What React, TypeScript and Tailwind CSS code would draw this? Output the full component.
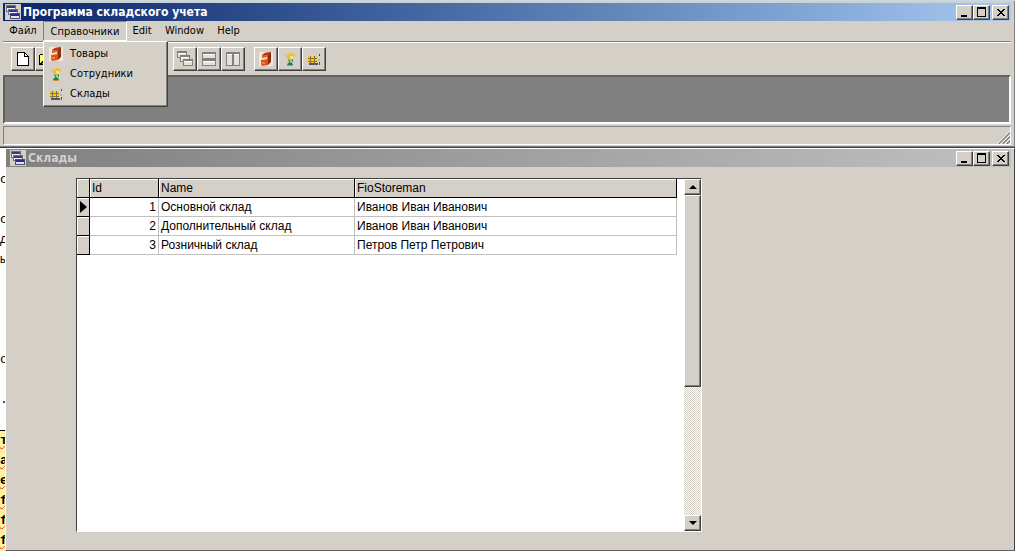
import type { ReactNode } from "react"
import clsx from "clsx"
import { Save, Scissors, Copy, ClipboardPaste } from "lucide-react"

const RAISED =
  "border border-t-white border-l-white border-r-[#404040] border-b-[#404040] bg-[#d4d0c8] shadow-[inset_-1px_-1px_0_#808080]"

const STORES = [
  { id: 1, name: "Основной склад", storeman: "Иванов Иван Иванович" },
  { id: 2, name: "Дополнительный склад", storeman: "Иванов Иван Иванович" },
  { id: 3, name: "Розничный склад", storeman: "Петров Петр Петрович" },
]

// lines of the code editor that lies behind both windows
const EDITOR_LINES = ["", "с", "", "с", "д", "ы", "", "", "", "", "о", "", ".", ""]
const MARKED_LINES = ["т", "а", "е", "f", "f", "f"]

function AppIcon() {
  return (
    <svg viewBox="0 0 16 16" className="h-4 w-4 shrink-0" shapeRendering="crispEdges" aria-hidden="true">
      <rect width="16" height="16" fill="#d4d0c8" />
      <rect x="1" y="1" width="10" height="7" fill="#707078" />
      <rect x="2" y="2" width="8" height="2" fill="#3a3a80" />
      <rect x="2" y="4" width="8" height="3" fill="#f0f0f4" />
      <rect x="3" y="5" width="10" height="6" fill="#707078" />
      <rect x="4" y="6" width="8" height="2" fill="#3a3a80" />
      <rect x="4" y="8" width="8" height="2" fill="#f0f0f4" />
      <rect x="5" y="9" width="10" height="6" fill="#505060" />
      <rect x="6" y="10" width="8" height="2" fill="#2a2a90" />
      <rect x="6" y="12" width="8" height="2" fill="#e4e4ec" />
    </svg>
  )
}

function NewIcon() {
  return (
    <svg viewBox="0 0 16 16" className="h-4 w-4" shapeRendering="crispEdges" aria-hidden="true">
      <path d="M2 1h8v1h1v1h1v1h1v1h1v10H2z" fill="#000" />
      <path d="M3 2h6v4h4v8H3z" fill="#fff" />
      <path d="M10 3h1v1h1v1h-2z" fill="#fff" />
    </svg>
  )
}

function OpenIcon() {
  return (
    <svg viewBox="0 0 16 16" className="h-4 w-4" shapeRendering="crispEdges" aria-hidden="true">
      <path d="M0 4h1V3h4v1h6v4h4l-4 6H0z" fill="#000" />
      <path d="M1 5V4h4v1h5v3H5l-4 5z" fill="#ffff66" />
      <path d="M5 9h9l-3 4H3z" fill="#808000" />
    </svg>
  )
}

function CascadeIcon() {
  return (
    <svg viewBox="0 0 16 16" className="h-4 w-4" shapeRendering="crispEdges" aria-hidden="true">
      {[
        [0, 0],
        [3, 4],
        [6, 8],
      ].map(([x, y]) => (
        <g key={x}>
          <rect x={x} y={y} width="10" height="7" fill="#808080" />
          <rect x={x + 1} y={y + 2} width="8" height="1" fill="#fff" />
          <rect x={x + 1} y={y + 3} width="8" height="3" fill="#e4e2dc" />
        </g>
      ))}
    </svg>
  )
}

function TileHorizontalIcon() {
  return (
    <svg viewBox="0 0 16 16" className="h-4 w-4" shapeRendering="crispEdges" aria-hidden="true">
      {[1, 8].map((y) => (
        <g key={y}>
          <rect x="1" y={y} width="14" height="7" fill="#808080" />
          <rect x="2" y={y + 2} width="12" height="1" fill="#fff" />
          <rect x="2" y={y + 3} width="12" height="3" fill="#e4e2dc" />
        </g>
      ))}
    </svg>
  )
}

function TileVerticalIcon() {
  return (
    <svg viewBox="0 0 16 16" className="h-4 w-4" shapeRendering="crispEdges" aria-hidden="true">
      {[1, 8].map((x) => (
        <g key={x}>
          <rect x={x} y="1" width="7" height="14" fill="#808080" />
          <rect x={x + 1} y="3" width="5" height="1" fill="#fff" />
          <rect x={x + 1} y="4" width="5" height="10" fill="#e4e2dc" />
        </g>
      ))}
    </svg>
  )
}

function GoodsIcon() {
  return (
    <svg viewBox="0 0 16 16" className="h-4 w-4" aria-hidden="true">
      <rect x="1" y="1" width="14" height="14" fill="#f4e6dc" />
      <path d="M4 4l3-2 6-1v5l-3 2-6 1z" fill="#e0602c" />
      <path d="M4 4l3-2 6-1-3 3z" fill="#a83c14" />
      <path d="M10 4l3-3v10l-3 3z" fill="#8c2e10" />
      <path d="M3 9l7-1v6l-6 1-1-2z" fill="#e05010" />
      <path d="M4 7l5-1v2l-5 1z" fill="#f4d8c4" />
      <path d="M3 11h4v2H4z" fill="#f48038" />
    </svg>
  )
}

function StaffIcon() {
  return (
    <svg viewBox="0 0 16 16" className="h-4 w-4" aria-hidden="true">
      <path d="M6 3l3-1 4 1v2l-2 1-3 3-2-2z" fill="#f0c030" />
      <path d="M8 5h3v3H9z" fill="#f8e0a8" />
      <path d="M3 3l2 1 2 3-1 1z" fill="#e8b838" />
      <path d="M6 8l2 1 3-1v3l-2 1H7z" fill="#38a048" />
      <path d="M8 9l2 1-1 2z" fill="#f0f4f0" />
      <path d="M6 12h4l1 2H5z" fill="#207850" />
      <path d="M5 14h6v1H5z" fill="#c89838" />
    </svg>
  )
}

function StoresIcon() {
  return (
    <svg viewBox="0 0 16 16" className="h-4 w-4" shapeRendering="crispEdges" aria-hidden="true">
      <rect x="2" y="5" width="9" height="7" fill="#f4cc38" />
      <path d="M2 7h9v1H2zM2 10h9v1H2zM4 5h1v7H4zM8 5h1v7H8z" fill="#8c7030" />
      <rect x="3" y="12" width="9" height="2" fill="#485870" />
      <rect x="13" y="3" width="1" height="2" fill="#304870" />
      <rect x="12" y="8" width="2" height="2" fill="#90b8d8" />
      <rect x="13" y="11" width="1" height="3" fill="#2860a0" />
    </svg>
  )
}

const DIRECTORIES = [
  { label: "Товары", icon: GoodsIcon },
  { label: "Сотрудники", icon: StaffIcon },
  { label: "Склады", icon: StoresIcon },
]

const TOOL_GROUPS = [
  [
    { label: "New", icon: NewIcon },
    { label: "Open", icon: OpenIcon },
    { label: "Save", icon: () => <Save className="h-4 w-4" /> },
  ],
  [
    { label: "Cut", icon: () => <Scissors className="h-4 w-4" /> },
    { label: "Copy", icon: () => <Copy className="h-4 w-4" /> },
    { label: "Paste", icon: () => <ClipboardPaste className="h-4 w-4" /> },
  ],
  [
    { label: "Cascade", icon: CascadeIcon },
    { label: "Tile horizontally", icon: TileHorizontalIcon },
    { label: "Tile vertically", icon: TileVerticalIcon },
  ],
  DIRECTORIES,
]

function CaptionButton({ label, children, className }: { label: string; children: ReactNode; className?: string }) {
  return (
    <button type="button" aria-label={label} className={clsx(RAISED, "flex h-[15px] w-[17px] items-center justify-center", className)}>
      <svg viewBox="0 0 12 11" className="h-[11px] w-3 shrink-0" shapeRendering="crispEdges" aria-hidden="true">
        {children}
      </svg>
    </button>
  )
}

function TitleBar({ title, active }: { title: string; active?: boolean }) {
  return (
    <div
      className={clsx(
        "flex h-[18px] items-center bg-linear-to-r pr-[2px]",
        active ? "from-[#0a246a] to-[#a6caf0] pl-[2px] text-white" : "from-[#808080] to-[#c0c0c0] pl-1 text-[#d4d0c8]"
      )}
    >
      <AppIcon />
      <h1 className="ml-[2px] flex-1 text-[12px] leading-4 font-bold whitespace-nowrap">{title}</h1>
      <CaptionButton label="Minimize">
        <rect x="2" y="8" width="6" height="2" />
      </CaptionButton>
      <CaptionButton label="Maximize">
        <path d="M1 0h9v10H1zM2 2v7h7V2z" fillRule="evenodd" />
      </CaptionButton>
      <CaptionButton label="Close" className="ml-[2px]">
        <path d="M2 2h2v1h1v1h2V3h1V2h2v1H9v1H8v1H7v1h1v1h1v1h1v1H8V8H7V7H5v1H4v1H2V8h1V7h1V6h1V5H4V4H3V3H2z" />
      </CaptionButton>
    </div>
  )
}

function MenuBar() {
  return (
    <nav className="flex h-[21px] items-start text-[11px] leading-4 whitespace-nowrap">
      <button type="button" className="w-10 pt-[2px]">
        Файл
      </button>
      <div className="relative">
        <button
          type="button"
          aria-expanded="true"
          className="h-[20px] w-[84px] border border-t-[#808080] border-r-white border-b-white border-l-[#808080] pt-[2px]"
        >
          Справочники
        </button>
        <div className={clsx(RAISED, "absolute top-[20px] left-0 z-10 w-[125px] p-[2px]")}>
          {DIRECTORIES.map(({ label, icon: Icon }) => (
            <button key={label} type="button" className="flex h-5 w-full items-center gap-[6px] pl-[2px]">
              <Icon />
              {label}
            </button>
          ))}
        </div>
      </div>
      <button type="button" className="w-[30px] pt-[2px]">
        Edit
      </button>
      <button type="button" className="w-[55px] pt-[2px]">
        Window
      </button>
      <button type="button" className="w-[33px] pt-[2px]">
        Help
      </button>
    </nav>
  )
}

function ToolBar() {
  return (
    <div className="flex gap-[9px] border-t border-white py-1 pl-2 shadow-[0_-1px_0_#808080]">
      {TOOL_GROUPS.map((group, idx) => (
        <div key={idx} className="flex">
          {group.map(({ label, icon: Icon }) => (
            <button key={label} type="button" aria-label={label} className={clsx(RAISED, "flex h-6 w-6 items-center justify-center")}>
              <Icon />
            </button>
          ))}
        </div>
      ))}
    </div>
  )
}

function MainWindow() {
  return (
    <section className="border-t border-b border-t-[#c4dae8] border-b-[#404040] bg-[#d4d0c8] pt-[2px] pr-1 pb-[2px] pl-[3px] shadow-[inset_-1px_-1px_0_#808080]">
      <TitleBar title="Программа складского учета" active />
      <MenuBar />
      <ToolBar />
      <div className="h-[49px] border-2 border-t-[#606060] border-r-white border-b-white border-l-[#606060] bg-[#808080]" />
      <footer className="mt-[2px] flex h-[19px] items-end justify-end border border-t-[#808080] border-r-white border-b-white border-l-[#808080]">
        <svg viewBox="0 0 14 14" className="h-[14px] w-[14px]" aria-hidden="true">
          <path d="M1 14L14 1M5 14L14 5M9 14L14 9" stroke="#fff" strokeWidth="1" />
          <path d="M2.500 14L14 2.500M6.500 14L14 6.500M10.500 14L14 10.500" stroke="#808080" strokeWidth="1.300" />
        </svg>
      </footer>
    </section>
  )
}

function StoresTable() {
  const head = "h-[19px] border-r border-b border-black bg-[#d4d0c8] pl-[2px] text-left font-normal shadow-[inset_1px_1px_0_#fff]"
  const cell = "border-r border-b border-[#c0c0c0] px-[2px]"
  return (
    <table className="w-[600px] table-fixed border-separate border-spacing-0 text-[12px] leading-[18px] whitespace-nowrap">
      <colgroup>
        <col className="w-[13px]" />
        <col className="w-[69px]" />
        <col className="w-[196px]" />
        <col />
      </colgroup>
      <thead>
        <tr>
          <th className={head} aria-label="Current row" />
          <th className={head}>Id</th>
          <th className={head}>Name</th>
          <th className={head}>FioStoreman</th>
        </tr>
      </thead>
      <tbody>
        {STORES.map((store, idx) => (
          <tr key={store.id} className="h-[19px]">
            <td className="border-r border-b border-black bg-[#d4d0c8] shadow-[inset_1px_1px_0_#fff]">
              {idx === 0 && (
                <svg viewBox="0 0 12 14" className="block h-[14px] w-3" aria-hidden="true">
                  <path d="M3 1v12l7-6z" />
                </svg>
              )}
            </td>
            <td className={clsx(cell, "text-right")}>{store.id}</td>
            <td className={cell}>{store.name}</td>
            <td className={cell}>{store.storeman}</td>
          </tr>
        ))}
      </tbody>
    </table>
  )
}

function ScrollBar() {
  return (
    <div className="flex w-[17px] flex-col bg-[repeating-conic-gradient(#d4d0c8_0_25%,#fff_0_50%)] bg-size-[2px_2px]">
      <button type="button" aria-label="Scroll up" className={clsx(RAISED, "flex h-4 items-center justify-center")}>
        <svg viewBox="0 0 8 4" className="h-1 w-2" aria-hidden="true">
          <path d="M4 0l4 4H0z" />
        </svg>
      </button>
      <div className="flex-1">
        <div className={clsx(RAISED, "h-3/5")} />
      </div>
      <button type="button" aria-label="Scroll down" className={clsx(RAISED, "flex h-4 items-center justify-center")}>
        <svg viewBox="0 0 8 4" className="h-1 w-2" aria-hidden="true">
          <path d="M0 0h8L4 4z" />
        </svg>
      </button>
    </div>
  )
}

function EditorStrip() {
  return (
    <div className="flex w-[5px] shrink-0 flex-col overflow-hidden bg-white pt-[2px] font-['Liberation_Mono',monospace] text-[13px] leading-5" aria-hidden="true">
      {EDITOR_LINES.map((line, idx) => (
        <div key={idx} className="h-5 shrink-0">
          {line}
        </div>
      ))}
      <div className="flex-1 border-t border-black bg-[#fdf3a0] font-bold">
        {MARKED_LINES.map((line, idx) => (
          <div key={idx} className="h-5 underline decoration-red-500 decoration-wavy decoration-1">
            {line}
          </div>
        ))}
      </div>
    </div>
  )
}

export default function App() {
  return (
    <div className="flex h-screen flex-col overflow-hidden bg-[#d4d0c8] font-['DejaVu_Sans_Condensed','DejaVu_Sans',sans-serif] text-black">
      <MainWindow />
      <div className="flex min-h-0 flex-1">
        <EditorStrip />
        <section className="flex min-w-0 flex-1 flex-col border border-t-white border-r-[#404040] border-b-[#606060] border-l-white pr-[3px]">
          <TitleBar title="Склады" />
          <div className="mt-[11px] mb-[18px] ml-[70px] flex min-h-0 w-[626px] flex-1 border border-t-[#404040] border-r-white border-b-white border-l-[#404040] bg-white font-['Liberation_Sans',Arial,sans-serif]">
            <div className="flex-1">
              <StoresTable />
            </div>
            <ScrollBar />
          </div>
        </section>
      </div>
    </div>
  )
}
